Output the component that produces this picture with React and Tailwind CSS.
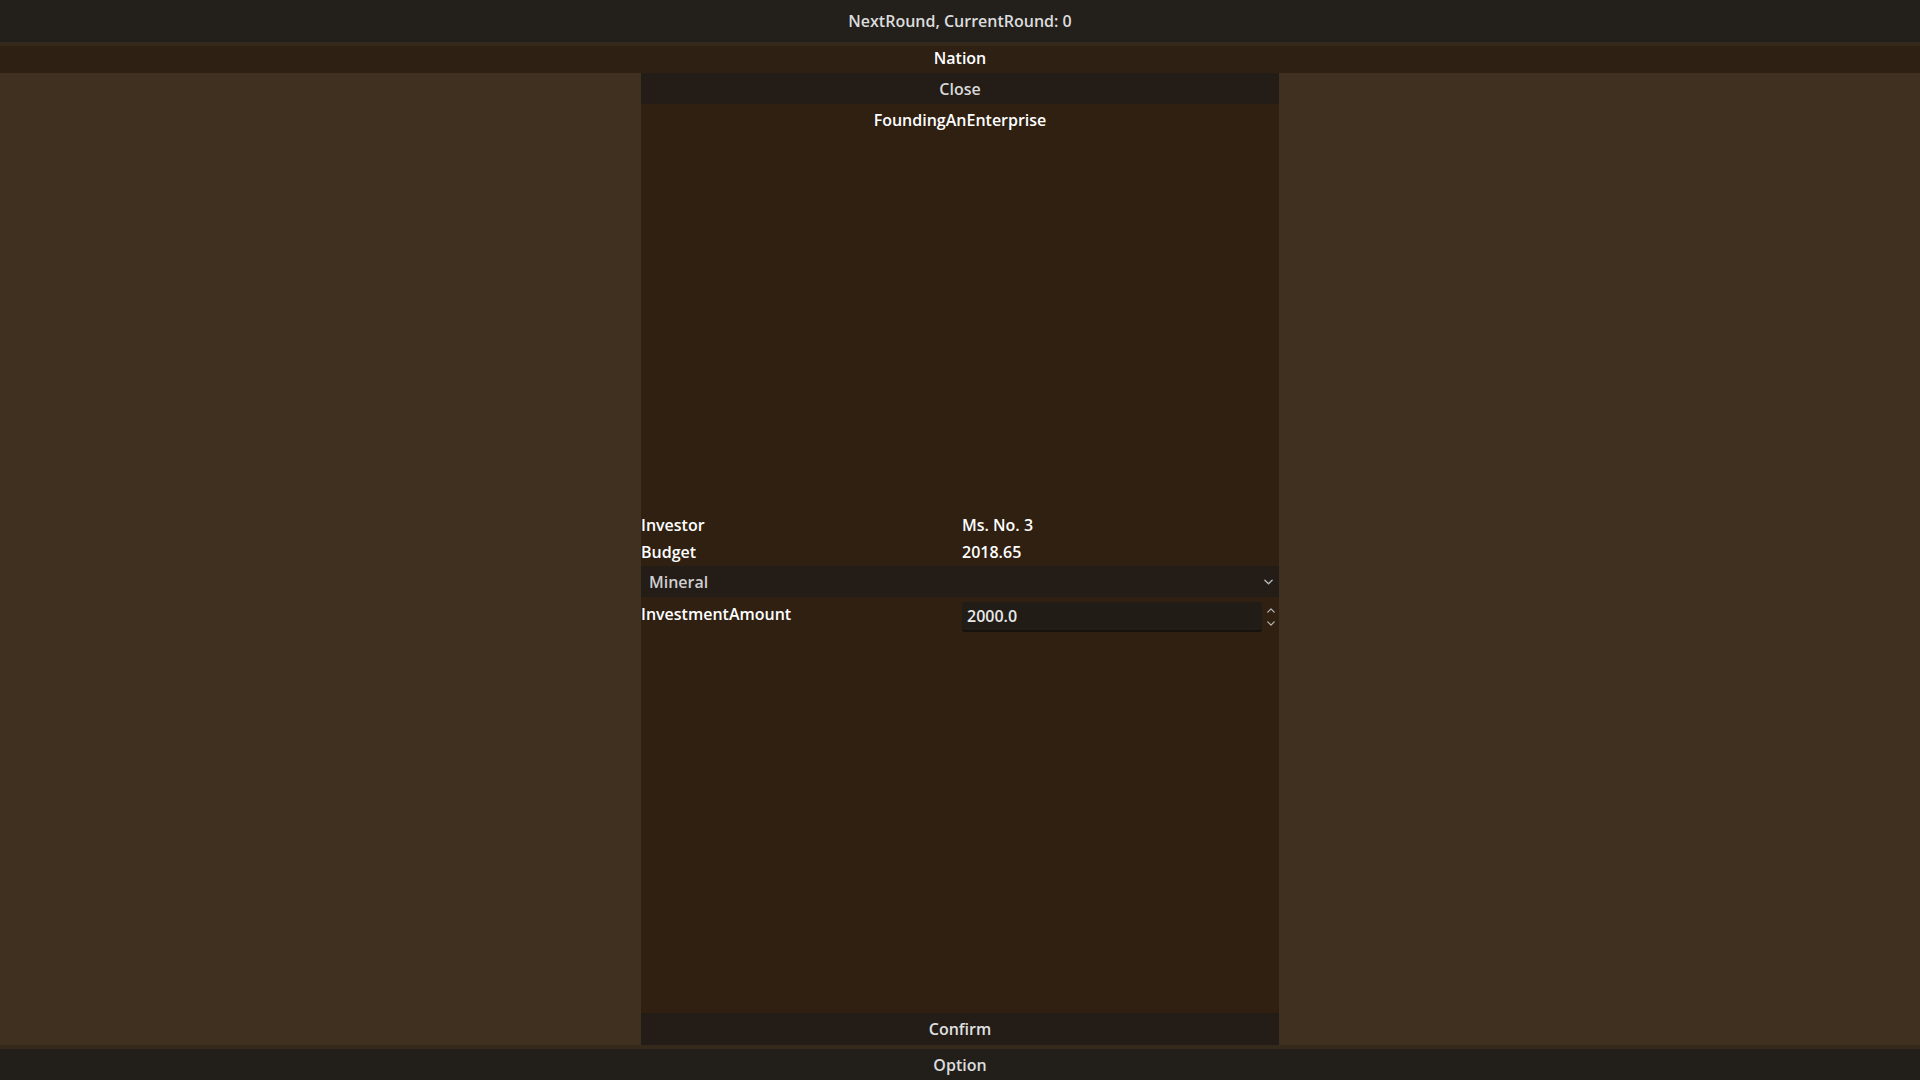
import React from 'react';

const font = { fontFamily: '"Open Sans", "Noto Sans", sans-serif' };

const ChevronDown = ({ className }) => (
  <svg viewBox="0 0 10 6" className={className} fill="none" stroke="currentColor" strokeWidth="1.6" strokeLinecap="round" strokeLinejoin="round">
    <path d="M1 1l4 4 4-4" />
  </svg>
);

const ChevronUp = ({ className }) => (
  <svg viewBox="0 0 10 6" className={className} fill="none" stroke="currentColor" strokeWidth="1.6" strokeLinecap="round" strokeLinejoin="round">
    <path d="M1 5l4-4 4 4" />
  </svg>
);

const App = () => {
  return (
    <div className="w-[1920px] h-[1080px] flex flex-col bg-[#3f3020] text-[16px] font-semibold overflow-hidden" style={font}>
      {/* Top bar */}
      <div className="h-[42px] shrink-0 bg-[#23201c] flex items-center justify-center text-[#dcdcdc]">
        NextRound, CurrentRound: 0
      </div>
      <div className="h-[4px] shrink-0 bg-[#35291b]" />

      {/* Nation header */}
      <div className="h-[27px] shrink-0 bg-[#2e2013] flex items-center justify-center pb-[3px] text-white">
        Nation
      </div>

      {/* Main area */}
      <div className="flex-1 flex justify-center min-h-0">
        <div className="w-[638px] flex flex-col bg-[#2f2012]">
          <div className="h-[31px] shrink-0 bg-[#231c17] flex items-center justify-center text-[#d8d8d8]">
            Close
          </div>
          <div className="h-[32px] shrink-0 flex items-center justify-center text-white">
            FoundingAnEnterprise
          </div>

          <div className="h-[377px] shrink-0" />

          {/* Form */}
          <div className="grid grid-cols-2 gap-x-[4px] text-white">
            <div className="h-[24px] flex items-center">Investor</div>
            <div className="h-[24px] flex items-center">Ms. No. 3</div>
          </div>
          <div className="grid grid-cols-2 gap-x-[4px] text-white mt-[3px]">
            <div className="h-[24px] flex items-center">Budget</div>
            <div className="h-[24px] flex items-center">2018.65</div>
          </div>

          <div className="mt-[2px] h-[31px] bg-[#231c17] flex items-center justify-between pl-[8px] pr-[6px] text-[#cfcfcf]">
            <span>Mineral</span>
            <ChevronDown className="w-[9px] h-[6px] text-[#b5b5b5]" />
          </div>

          <div className="grid grid-cols-2 gap-x-[4px] mt-[5px]">
            <div className="h-[24px] flex items-center text-white">InvestmentAmount</div>
            <div className="h-[30px] flex items-stretch">
              <div className="flex-1 bg-[#221c17] rounded-[3px] border-b-2 border-[#17120e] flex items-center pl-[5px] text-[#e8e8e8]">
                2000.0
              </div>
              <div className="w-[17px] flex flex-col items-center justify-center gap-[8px] text-[#b5b5b5]">
                <ChevronUp className="w-[8px] h-[5px]" />
                <ChevronDown className="w-[8px] h-[5px]" />
              </div>
            </div>
          </div>

          <div className="flex-1" />

          <div className="h-[32px] shrink-0 bg-[#231c17] flex items-center justify-center text-[#e0e0e0]">
            Confirm
          </div>
        </div>
      </div>

      <div className="h-[4px] shrink-0 bg-[#35291b]" />
      {/* Bottom bar */}
      <div className="h-[31px] shrink-0 bg-[#221f1b] flex items-center justify-center text-[#dcdcdc]">
        Option
      </div>
    </div>
  );
};

export default App;
